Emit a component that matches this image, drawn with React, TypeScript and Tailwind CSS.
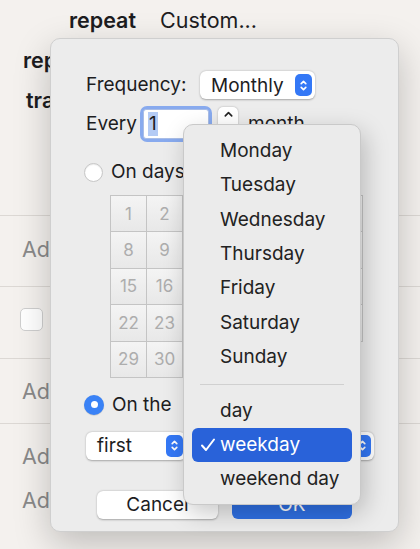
import React from 'react'

const days = Array.from({ length: 31 }, (_, i) => i + 1)

const menuDays = ['Monday', 'Tuesday', 'Wednesday', 'Thursday', 'Friday', 'Saturday', 'Sunday']
const menuKinds = ['day', 'weekday', 'weekend day']

function Chevrons({ className }: { className?: string }) {
  return (
    <svg viewBox="0 0 12 16" className={className} fill="none" stroke="white" strokeWidth="1.8" strokeLinecap="round" strokeLinejoin="round">
      <path d="M3.5 6 L6 3.5 L8.5 6" />
      <path d="M3.5 10 L6 12.5 L8.5 10" />
    </svg>
  )
}

function PopupButton({ label, width }: { label: string; width: string }) {
  return (
    <div className={`${width} h-[28px] flex items-center rounded-[6px] bg-white pl-[11px] pr-[3px] shadow-[0_0.5px_2px_rgba(0,0,0,0.3)]`}>
      <span className="text-[19px] leading-none">{label}</span>
      <div className="ml-auto w-[17px] h-[22px] rounded-[5px] bg-[#3478f6] flex items-center justify-center">
        <Chevrons className="w-[11px] h-[15px]" />
      </div>
    </div>
  )
}

function Background() {
  return (
    <div className="flex flex-col text-[21.5px] leading-[24px]">
      <div className="h-[40px] flex items-center pl-[69px] gap-[24px]">
        <span className="font-semibold">repeat</span>
        <span>Custom...</span>
      </div>
      <div className="h-[40px] flex items-center pl-[23px] font-semibold">repeat</div>
      <div className="h-[40px] flex items-center pl-[26px] font-semibold">track</div>
      <div className="h-[96px] border-b border-[#dcd8d4]" />
      <div className="h-[71px] flex items-center pl-[22px] pb-[4px] text-[#8a8a8a] border-b border-[#dcd8d4]">Add</div>
      <div className="h-[72px] flex items-center pl-[20px] pb-[6px] border-b border-[#dcd8d4]">
        <div className="w-[23px] h-[23px] rounded-[5px] bg-white border border-[#cfcfcf]" />
      </div>
      <div className="h-[65px] flex items-center pl-[22px] text-[#8a8a8a] border-b border-[#dcd8d4]">Add</div>
      <div className="h-[64px] flex items-center pl-[22px] text-[#8a8a8a]">Add</div>
      <div className="h-[24px] flex items-center pl-[22px] text-[#8a8a8a]">Add</div>
    </div>
  )
}

function Dialog() {
  return (
    <div className="absolute left-[50px] top-[38px] w-[349px] h-[494px] rounded-[10px] bg-[#ececec] border border-[#cfcfcf] shadow-[0_12px_36px_rgba(0,0,0,0.22)] flex flex-col text-[19px] leading-[24px]">
      <div className="pl-[35px] pt-[32px] flex flex-col">
        <div className="h-[28px] flex items-center">
          <span className="w-[114px]">Frequency:</span>
          <PopupButton label="Monthly" width="w-[115px]" />
        </div>

        <div className="mt-[7px] h-[36px] flex items-center">
          <span className="w-[54px]">Every</span>
          <div className="w-[72px] h-[36px] rounded-[7px] bg-[#88aaee] p-[3px]">
            <div className="h-full rounded-[3px] bg-white border border-[#a9bde6] flex items-center pl-[4px]">
              <span className="bg-[#b4cbf5] px-[1px]">1</span>
            </div>
          </div>
          <div className="ml-[6px] w-[20px] h-[34px] rounded-[5px] bg-white shadow-[0_0.5px_2px_rgba(0,0,0,0.3)] flex flex-col items-center justify-between py-[3px]">
            <svg viewBox="0 0 12 8" className="w-[11px] h-[8px]" fill="none" stroke="#222" strokeWidth="1.8" strokeLinecap="round" strokeLinejoin="round">
              <path d="M2.5 6 L6 2.5 L9.5 6" />
            </svg>
            <svg viewBox="0 0 12 8" className="w-[11px] h-[8px]" fill="none" stroke="#222" strokeWidth="1.8" strokeLinecap="round" strokeLinejoin="round">
              <path d="M2.5 2 L6 5.5 L9.5 2" />
            </svg>
          </div>
          <span className="ml-[10px]">month</span>
        </div>

        <div className="mt-[20px] h-[20px] flex items-center -ml-[2px]">
          <div className="w-[19px] h-[19px] rounded-full bg-white border border-[#c6c6c6] shadow-[inset_0_1px_1px_rgba(0,0,0,0.08)]" />
          <span className="ml-[8px]">On days:</span>
        </div>

        <div className="mt-[13px] ml-[24px] w-[253px] grid grid-cols-7 border-l border-t border-[#c4c4c4]">
          {days.map((d) => (
            <div
              key={d}
              className="h-[36.4px] flex items-center justify-center border-r border-b border-[#c4c4c4] bg-gradient-to-b from-[#f4f4f4] to-[#e8e8e8] text-[17px] text-[#adadad]"
            >
              {d}
            </div>
          ))}
        </div>

        <div className="mt-[17px] h-[20px] flex items-center -ml-[2px]">
          <div className="w-[20px] h-[20px] rounded-full bg-[#3a82f6] flex items-center justify-center shadow-[0_0.5px_1px_rgba(0,0,0,0.2)]">
            <div className="w-[7px] h-[7px] rounded-full bg-white" />
          </div>
          <span className="ml-[8px]">On the</span>
        </div>

        <div className="mt-[17px] flex gap-[6px]">
          <PopupButton label="first" width="w-[100px]" />
          <PopupButton label="weekday" width="w-[182px]" />
        </div>
      </div>

      <div className="mt-[31px] flex justify-center gap-[14px]">
        <div className="w-[121px] h-[28px] rounded-[6px] bg-white shadow-[0_0.5px_2px_rgba(0,0,0,0.3)] flex items-center justify-center">
          Cancel
        </div>
        <div className="w-[120px] h-[28px] rounded-[6px] bg-[#2f6fe2] text-white flex items-center justify-center">
          OK
        </div>
      </div>
    </div>
  )
}

function DayMenu() {
  return (
    <div className="absolute left-[183px] top-[124px] w-[178px] h-[381px] rounded-[10px] bg-[#ebebeb] border border-[#c9c9c9] shadow-[4px_8px_24px_rgba(0,0,0,0.22)] px-[8px] pt-[9px] text-[19px] leading-[24px] text-[#222]">
      {menuDays.map((d) => (
        <div key={d} className="h-[34.3px] flex items-center pl-[28px]">
          {d}
        </div>
      ))}
      <div className="h-[20px] flex items-center px-[8px]">
        <div className="h-px w-full bg-[#d0d0d0]" />
      </div>
      {menuKinds.map((k) => {
        const selected = k === 'weekday'
        return (
          <div
            key={k}
            className={
              selected
                ? 'relative h-[34px] flex items-center pl-[28px] rounded-[6px] bg-[#2962d9] text-white'
                : 'h-[34px] flex items-center pl-[28px]'
            }
          >
            {selected && (
              <svg viewBox="0 0 16 16" className="absolute left-[8px] top-[9px] w-[16px] h-[16px]" fill="none" stroke="white" strokeWidth="2" strokeLinecap="round" strokeLinejoin="round">
                <path d="M2 8.5 L6 13 L14 2.5" />
              </svg>
            )}
            {k}
          </div>
        )
      })}
    </div>
  )
}

export default function App() {
  return (
    <div className="relative w-[420px] h-[549px] overflow-hidden bg-[#f4f1ee] font-['Inter'] text-[#1d1d1f]">
      <Background />
      <Dialog />
      <DayMenu />
    </div>
  )
}
